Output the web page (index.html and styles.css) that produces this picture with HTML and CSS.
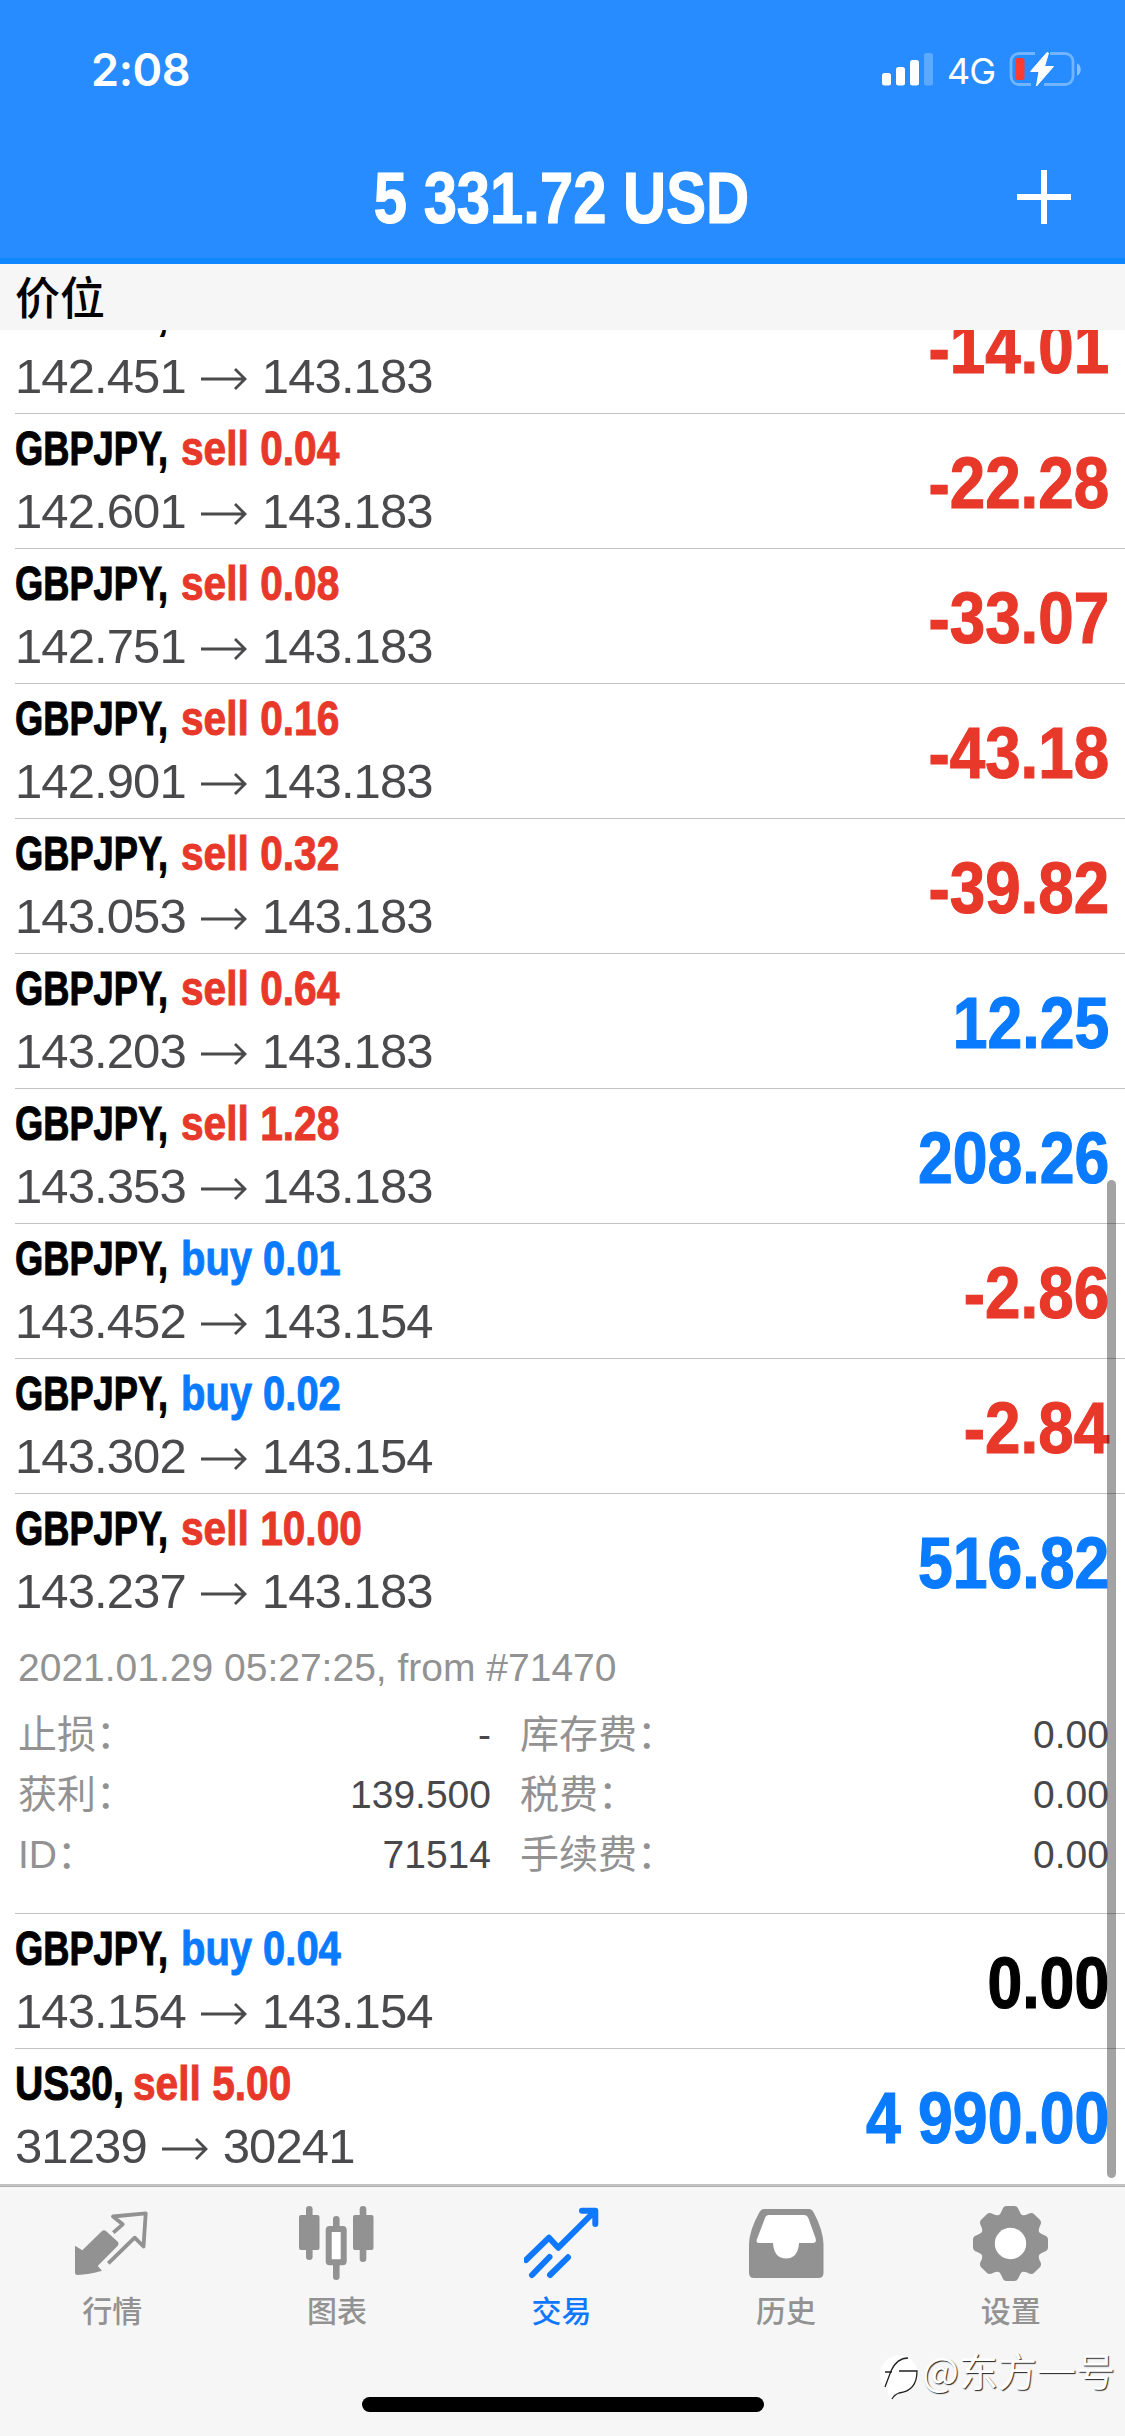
FILE: index.html
```html
<!DOCTYPE html>
<html lang="zh-CN">
<head>
<meta charset="utf-8">
<title>交易</title>
<link rel="stylesheet" href="styles.css">
</head>
<body>
<svg class="defs" width="0" height="0">
  <symbol id="arrow" viewBox="0 0 48 24"><path d="M1 12H45M35 2l10 10-10 10" fill="none" stroke="currentColor" stroke-width="2.8"/></symbol>
</svg>
<div class="app">
  <header class="top">
    <div class="status">
      <span class="time">2:08</span>
      <div class="status-right">
        <svg class="signal" width="51" height="33" viewBox="0 0 51 33" fill="#fff"><rect x="0" y="20" width="9" height="12.500" rx="2.500"/><rect x="14" y="14" width="9" height="18.500" rx="2.500"/><rect x="28" y="7" width="9" height="25.500" rx="2.500"/><rect x="42" y="0" width="9" height="32.500" rx="2.500" opacity=".25"/></svg>
        <span class="net">4G</span>
        <svg class="battery" width="74" height="38" viewBox="0 0 74 38"><path d="M27 3.500H11a8 8 0 0 0-8 8v15a8 8 0 0 0 8 8h12M42 3.500h15a8 8 0 0 1 8 8v15a8 8 0 0 1-8 8H36" fill="none" stroke="#fff" stroke-opacity=".35" stroke-width="2.800"/><path d="M69 13.500c5 1 5 11 0 12z" fill="#fff" opacity=".45"/><rect x="7.500" y="8" width="9" height="22" rx="2" fill="#ff3b30"/><path d="M39 2.500 22.500 21.500h8.500L28.500 36 45.500 16.500H36.500L40.500 3z" fill="#fff" stroke="#fff" stroke-linejoin="round"/></svg>
      </div>
    </div>
    <div class="title-bar">
      <h1 class="balance">5 331.72 USD</h1>
      <svg class="plus" width="54" height="54" viewBox="0 0 54 54" stroke="#fff" stroke-width="6"><path d="M0 27h54M27 0v54"/></svg>
    </div>
  </header>
  <div class="section">价位</div>
  <main class="list">
    <div class="row row-cut"><div class="info"><div class="name"><span class="sym">GBPJPY,</span><span class="side sell">sell 0.02</span></div><div class="price">142.451<svg><use href="#arrow"/></svg>143.183</div></div><div class="value sell">-14.01</div></div>
    <div class="row"><div class="info"><div class="name"><span class="sym">GBPJPY,</span><span class="side sell">sell 0.04</span></div><div class="price">142.601<svg><use href="#arrow"/></svg>143.183</div></div><div class="value sell">-22.28</div></div>
    <div class="row"><div class="info"><div class="name"><span class="sym">GBPJPY,</span><span class="side sell">sell 0.08</span></div><div class="price">142.751<svg><use href="#arrow"/></svg>143.183</div></div><div class="value sell">-33.07</div></div>
    <div class="row"><div class="info"><div class="name"><span class="sym">GBPJPY,</span><span class="side sell">sell 0.16</span></div><div class="price">142.901<svg><use href="#arrow"/></svg>143.183</div></div><div class="value sell">-43.18</div></div>
    <div class="row"><div class="info"><div class="name"><span class="sym">GBPJPY,</span><span class="side sell">sell 0.32</span></div><div class="price">143.053<svg><use href="#arrow"/></svg>143.183</div></div><div class="value sell">-39.82</div></div>
    <div class="row"><div class="info"><div class="name"><span class="sym">GBPJPY,</span><span class="side sell">sell 0.64</span></div><div class="price">143.203<svg><use href="#arrow"/></svg>143.183</div></div><div class="value buy">12.25</div></div>
    <div class="row"><div class="info"><div class="name"><span class="sym">GBPJPY,</span><span class="side sell">sell 1.28</span></div><div class="price">143.353<svg><use href="#arrow"/></svg>143.183</div></div><div class="value buy">208.26</div></div>
    <div class="row"><div class="info"><div class="name"><span class="sym">GBPJPY,</span><span class="side buy">buy 0.01</span></div><div class="price">143.452<svg><use href="#arrow"/></svg>143.154</div></div><div class="value sell">-2.86</div></div>
    <div class="row"><div class="info"><div class="name"><span class="sym">GBPJPY,</span><span class="side buy">buy 0.02</span></div><div class="price">143.302<svg><use href="#arrow"/></svg>143.154</div></div><div class="value sell">-2.84</div></div>
    <div class="row row-open"><div class="info"><div class="name"><span class="sym">GBPJPY,</span><span class="side sell">sell 10.00</span></div><div class="price">143.237<svg><use href="#arrow"/></svg>143.183</div></div><div class="value buy">516.82</div></div>
    <section class="details">
      <div class="date">2021.01.29 05:27:25, from #71470</div>
      <dl class="grid">
        <dt>止损：</dt><dd>-</dd><dt>库存费：</dt><dd>0.00</dd>
        <dt>获利：</dt><dd>139.500</dd><dt>税费：</dt><dd>0.00</dd>
        <dt>ID：</dt><dd>71514</dd><dt>手续费：</dt><dd>0.00</dd>
      </dl>
    </section>
    <div class="row"><div class="info"><div class="name"><span class="sym">GBPJPY,</span><span class="side buy">buy 0.04</span></div><div class="price">143.154<svg><use href="#arrow"/></svg>143.154</div></div><div class="value">0.00</div></div>
    <div class="row row-last"><div class="info"><div class="name"><span class="sym sym-short">US30,</span><span class="side sell">sell 5.00</span></div><div class="price">31239<svg><use href="#arrow"/></svg>30241</div></div><div class="value buy">4 990.00</div></div>
    <div class="scrollbar"></div>
  </main>
  <footer class="bottom">
    <nav class="tabs">
      <div class="tab"><svg viewBox="0 0 75 75"><path d="M0 39.700 7.300 44.300 26.500 25.500q2.500-2.500 5 0L42.500 35.500q2 2 0 4.500L22.700 60l4.300 4.700Q14 68.500 2.500 69 0 69 0 67z" fill="currentColor"/><path d="M38.300 26.700 47.700 18.300 38 10.500 70.700 7.300 68.500 40.500 59.700 31.700 33.300 57.300" fill="none" stroke="currentColor" stroke-width="3.800" stroke-linejoin="round"/></svg><span>行情</span></div>
      <div class="tab"><svg viewBox="0 0 75 75" fill="currentColor"><rect x="0" y="9" width="20.500" height="35" rx="2"/><rect x="7" y="0" width="6.600" height="54" rx="3.300"/><rect x="54" y="9" width="20.500" height="35" rx="2"/><rect x="60.700" y="0" width="6.600" height="56" rx="3.300"/><rect x="34" y="10" width="6.600" height="20" rx="3.300"/><rect x="34" y="54" width="6.600" height="20" rx="3.300"/><rect x="29.700" y="23" width="15" height="33.300" rx="1" fill="#fff" stroke="currentColor" stroke-width="6"/></svg><span>图表</span></div>
      <div class="tab active"><svg viewBox="0 0 75 75" fill="none" stroke="currentColor" stroke-width="6" stroke-linecap="round" stroke-linejoin="round"><path d="M2 54 25 31.700 34.300 41.700 71 5M58 4.700H71.300V18M8 69 25.500 51M26 69 44 51.300"/></svg><span>交易</span></div>
      <div class="tab"><svg viewBox="0 0 75 75"><path d="M15 3H60q3 0 5 4 9 17 9.500 31V67q0 5-5 5H5q-5 0-5-5V38Q.5 24 10 7q2-4 5-4z" fill="currentColor"/><path d="M20 9H55q3 0 4.300 3l7.200 20q1.500 5-2 5H50q-1 15.500-13 15.500T24 37H10.500q-4 0-2.500-4l8-21q1-3 4-3z" fill="#fff"/></svg><span>历史</span></div>
      <div class="tab"><svg viewBox="-37.500 -37.500 75 75"><g fill="currentColor" stroke="currentColor" stroke-width="2" stroke-linejoin="round"><circle r="28.500"/><g id="teeth"><path id="tooth" d="M-13-26Q-8.500-29-7.500-33-6.500-36.500-4-36.500H4Q6.500-36.500 7.500-33 8.500-29 13-26z"/><use href="#tooth" transform="rotate(45)"/><use href="#tooth" transform="rotate(90)"/><use href="#tooth" transform="rotate(135)"/></g><use href="#teeth" transform="rotate(180)"/></g><circle r="15.700" fill="#fff"/></svg><span>设置</span></div>
    </nav>
    <div class="home"></div>
    <div class="watermark"><svg width="40" height="46" viewBox="0 0 40 46"><circle cx="20" cy="19.500" r="19" fill="#fff"/><path d="M6 32 12 16Q18 3 29 3M6 17h7M20 16h18Q38 36 20 38q-5 2-7 6" fill="none" stroke="#222" stroke-width="1.300"/><path d="M16 18 11 42" stroke="#fff" stroke-width="5"/></svg><span>@东方一号</span></div>
  </footer>
</div>
</body>
</html>
```
FILE: styles.css
```css
* { box-sizing: border-box; }
body { margin: 0; background: #fff; color: #000; font-family: "Liberation Sans", "Noto Sans CJK SC", sans-serif; }
.defs { position: absolute; }
.app { width: 1125px; height: 2436px; display: flex; flex-direction: column; overflow: hidden; }

.top { height: 264px; flex: none; background: #268cff; border-bottom: 6px solid #0f88ff; color: #fff; }
.status { height: 132px; padding: 50px 43px 0 91px; display: flex; justify-content: space-between; align-items: flex-start; }
.time { font: 600 45px/40px Inter, sans-serif; letter-spacing: -0.4px; }
.status-right { display: flex; align-items: flex-start; }
.signal { margin-top: 3px; }
.net { margin: 0 14px 0 14px; width: 47px; font: 400 36px/42px Inter, sans-serif; letter-spacing: -1px; }
.title-bar { height: 126px; padding: 4px 54px 0; display: grid; grid-template-columns: 54px 1fr 54px; align-items: center; }
.balance { grid-column: 2; margin: 2px 2px 0 0; text-align: center; font-size: 72px; line-height: 80px; white-space: nowrap; transform: scaleX(.83); -webkit-text-stroke: 1.2px; }

.section { height: 66px; flex: none; padding-left: 15px; background: #f6f6f6; font: 500 45px/64px "Noto Sans CJK SC", sans-serif; }

.list { position: relative; height: 1856px; flex: none; overflow: hidden; }
.row { height: 135px; margin-left: 15px; padding-right: 16px; border-bottom: 1px solid #c2c2c4; display: flex; justify-content: space-between; }
.row-cut { margin-top: -51px; }
.row-cut .name { margin: -1px 0 1px; }
.row-open { height: 134px; border-bottom: 0; }
.row-last { height: 137px; margin-left: 0; padding-left: 15px; border-bottom: 2px solid #c2c2c4; }
.info { padding-top: 5px; }
.name { display: flex; font-weight: 700; font-size: 49px; line-height: 58px; white-space: nowrap; -webkit-text-stroke: 1px; }
.sym { width: 166px; transform: scaleX(.74); transform-origin: 0 0; }
.sym-short { width: 118px; transform: scaleX(.8); }
.side { transform: scaleX(.83); transform-origin: 0 0; }
.side.buy { transform: scaleX(.815); }
.price { display: flex; align-items: center; font-size: 49px; line-height: 69px; letter-spacing: -.9px; color: #4a4a4d; }
.price svg { width: 48px; height: 24px; margin: 4px 14px 0 14px; }
.value { font-weight: 700; font-size: 72px; line-height: 138px; white-space: nowrap; transform: scaleX(.868); transform-origin: 100% 0; -webkit-text-stroke: 1.2px; }
.value.sell { transform: scaleX(.885); }
.sell { color: #e8382a; }
.buy { color: #0a7aff; }

.details { height: 286px; margin-left: 15px; padding: 10px 16px 0 3px; border-bottom: 1px solid #c2c2c4; font-size: 39px; line-height: 60px; color: #929292; }
.grid { margin: 7px 0 0; display: grid; grid-template-columns: 210px 263px 210px 1fr; }
.grid dt:nth-of-type(even) { padding-left: 29px; }
.grid dd { margin: 0; text-align: right; color: #48484a; }
.scrollbar { position: absolute; right: 9px; top: 850px; width: 9px; height: 998px; border-radius: 5px; background: rgba(0,0,0,.36); }

.bottom { position: relative; height: 250px; flex: none; background: #f6f6f6; border-top: 1px solid #b2b2b2; }
.tabs { display: grid; grid-template-columns: repeat(5, 1fr); padding-top: 19px; margin-right: 2px; }
.tab { display: flex; flex-direction: column; align-items: center; color: #929292; }
.tab svg { width: 75px; height: 75px; }
.tab span { margin-top: 6px; font: 500 30px/44px "Noto Sans CJK SC", sans-serif; }
.tab.active { color: #0f78ff; }
.home { width: 402px; height: 15px; margin: 66px auto 0; border-radius: 8px; background: #000; }
.watermark { position: absolute; right: 10px; top: 160px; display: flex; align-items: flex-start; color: #fff; }
.watermark svg { margin-top: 8px; }
.watermark span { margin-left: 3px; font: 400 39px/44px "Noto Sans CJK SC", sans-serif; text-shadow: 1px 1px 1px #222; }
```
